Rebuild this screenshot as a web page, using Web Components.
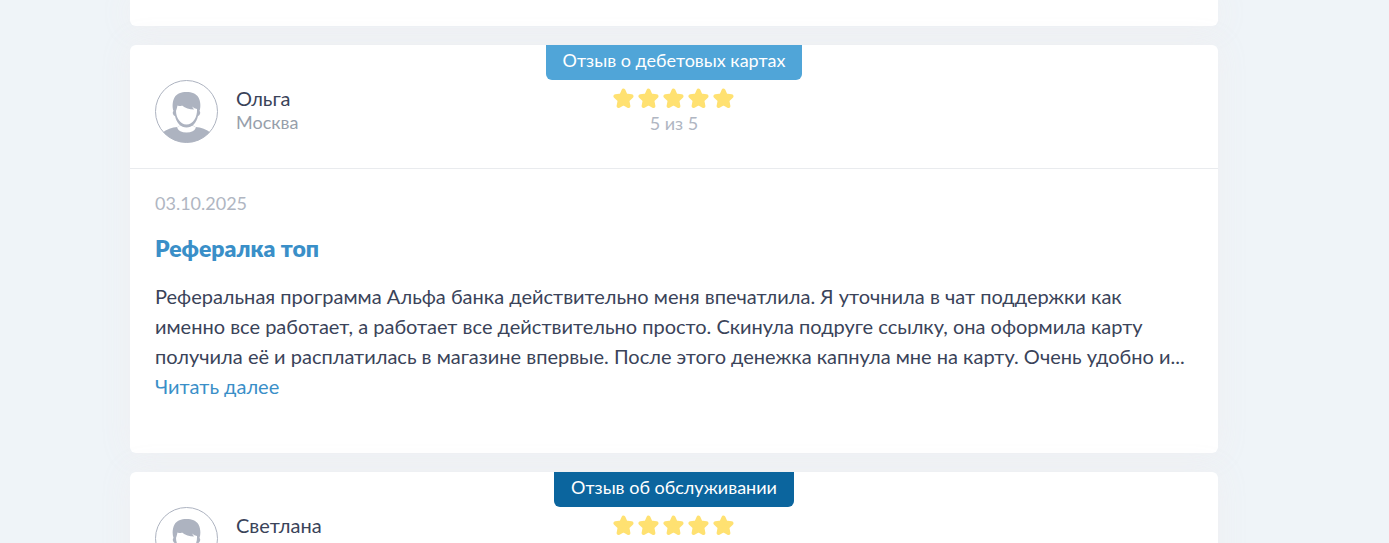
<!DOCTYPE html>
<html lang="ru">
<head>
<meta charset="utf-8">
<meta name="viewport" content="width=device-width, initial-scale=1">
<title>Отзывы</title>
<style>
  body { margin: 0; background: #eff4f8; color: #3a4359; font-family: Lato, "Open Sans", sans-serif; }
</style>
</head>
<body>
<review-feed>
  <review-card tail></review-card>
  <review-card>
    <review-tag slot="tag">Отзыв о дебетовых картах</review-tag>
    <review-author slot="author" name="Ольга" city="Москва"></review-author>
    <star-rating slot="rating" value="5" label="5 из 5"></star-rating>
    <review-text slot="text" date="03.10.2025" heading="Рефералка топ">Реферальная программа Альфа банка действительно меня впечатлила. Я уточнила в чат поддержки как именно все работает, а работает все действительно просто. Скинула подруге ссылку, она оформила карту получила её и расплатилась в магазине впервые. После этого денежка капнула мне на карту. Очень удобно и...</review-text>
  </review-card>
  <review-card>
    <review-tag slot="tag" tone="dark">Отзыв об обслуживании</review-tag>
    <review-author slot="author" name="Светлана"></review-author>
    <star-rating slot="rating" value="5"></star-rating>
  </review-card>
</review-feed>

<script>
class ReviewFeed extends HTMLElement {
  constructor() {
    super();
    this.attachShadow({ mode: 'open' }).innerHTML = `
      <style>
        :host { display: block; height: 100vh; overflow: hidden; }
        main { display: flex; flex-direction: column; gap: 19px; padding: 0 171px 0 130px; }
      </style>
      <main><slot></slot></main>`;
  }
}

class ReviewCard extends HTMLElement {
  constructor() {
    super();
    this.attachShadow({ mode: 'open' }).innerHTML = `
      <style>
        :host { display: block; position: relative; background: #fff; border-radius: 6px; box-shadow: 0 0 30px rgba(240, 238, 241, .9); }
        :host([tail]) { height: 26px; border-radius: 0 0 6px 6px; }
        :host([tail]) header { display: none; }
        header { display: grid; grid-template-columns: 1fr auto 1fr; padding: 0 25px 25px; border-bottom: 1px solid #e9ebee; }
        .left { padding-top: 35px; }
        .mid { display: flex; flex-direction: column; align-items: center; gap: 8px; }
      </style>
      <header>
        <div class="left"><slot name="author"></slot></div>
        <div class="mid"><slot name="tag"></slot><slot name="rating"></slot></div>
      </header>
      <slot name="text"></slot>`;
  }
}

class ReviewTag extends HTMLElement {
  constructor() {
    super();
    this.attachShadow({ mode: 'open' }).innerHTML = `
      <style>
        :host { display: block; padding: 0 17px; height: 35px; box-sizing: border-box; border-radius: 0 0 6px 6px;
                background: #50a5d8; color: #fff; font-size: 18px; line-height: 30px; white-space: nowrap; }
        :host([tone="dark"]) { background: #0b659e; }
      </style>
      <slot></slot>`;
  }
}

class ReviewAuthor extends HTMLElement {
  connectedCallback() {
    const city = this.getAttribute('city');
    this.attachShadow({ mode: 'open' }).innerHTML = `
      <style>
        :host { display: flex; gap: 18px; }
        svg { width: 63px; height: 63px; flex: none; }
        .who { padding-top: 6px; }
        .name { font-size: 20px; line-height: 24px; }
        .city { font-size: 18px; line-height: 24px; color: #979fab; }
      </style>
      <svg viewBox="0 0 63 63" aria-hidden="true">
        <defs><clipPath id="c"><circle cx="31.5" cy="31.5" r="31"/></clipPath></defs>
        <circle cx="31.5" cy="31.5" r="31" fill="#fff"/>
        <g clip-path="url(#c)" fill="#adb3c0">
          <path d="M7 63V53Q14 47.500 22.500 47Q26 45.500 26 42.500L37 42.500Q37 45.500 40.500 47Q49 47.500 56 53V63Z"/>
          <path d="M22 47.500Q24 52.500 31.500 52.500Q39 52.500 41 47.500L36.500 45H26Z" fill="#fff"/>
          <path d="M18.500 31C17 27 17.500 21 19.500 17.500C22 13.500 26 12 31.500 12C37 12 41 13.500 43.500 17.500C45.500 21 46 27 44.500 31C46 32 45 35.500 43 36C41.500 43 37 47.500 31.500 47.500C26 47.500 21.500 43 20 36C18 35.500 17 32 18.500 31Z"/>
          <path d="M22.500 25.500Q25.500 26.500 27 25.500Q32 29.500 39 29.500L37 26.500Q39.500 28.500 42 29C42.500 37 38 44.500 31.500 44.500C25 44.500 21 37 21 31Q22 28 22.500 25.500Z" fill="#fff"/>
        </g>
        <circle cx="31.5" cy="31.5" r="31" fill="none" stroke="#adb3c0"/>
      </svg>
      <div class="who">
        <div class="name">${this.getAttribute('name')}</div>
        ${city ? `<div class="city">${city}</div>` : ''}
      </div>`;
  }
}

class StarRating extends HTMLElement {
  connectedCallback() {
    const star = `<svg viewBox="0 0 21 21" aria-hidden="true"><path d="M10.500 2.500L12.700 7.500L18.500 8.200L14.300 12.200L15.400 18L10.500 15.300L5.600 18L6.700 12.200L2.500 8.200L8.300 7.500Z" fill="#ffe171" stroke="#ffe171" stroke-width="4" stroke-linejoin="round"/></svg>`;
    const label = this.getAttribute('label');
    this.attachShadow({ mode: 'open' }).innerHTML = `
      <style>
        :host { display: block; text-align: center; }
        .stars { display: flex; justify-content: center; gap: 4px; }
        svg { width: 21px; height: 21px; }
        .label { font-size: 18px; line-height: 28px; color: #b0b6c2; }
      </style>
      <div class="stars">${star.repeat(+this.getAttribute('value'))}</div>
      ${label ? `<div class="label">${label}</div>` : ''}`;
  }
}

class ReviewText extends HTMLElement {
  connectedCallback() {
    this.attachShadow({ mode: 'open' }).innerHTML = `
      <style>
        :host { display: block; padding: 19px 25px 52px; }
        time { display: block; font-size: 18px; line-height: 30px; color: #b0b6c2; }
        h3 { margin: 15px 0 18px; font-size: 23px; line-height: 30px; font-weight: 800; color: #3a8fc8; }
        p { margin: 0; font-size: 20px; line-height: 30px; }
        a { font-size: 20px; line-height: 30px; color: #3a8fc8; text-decoration: none; display: block; }
      </style>
      <time datetime="2025-10-03">${this.getAttribute('date')}</time>
      <h3>${this.getAttribute('heading')}</h3>
      <p><slot></slot></p>
      <a href="#">Читать далее</a>`;
  }
}

customElements.define('review-feed', ReviewFeed);
customElements.define('review-card', ReviewCard);
customElements.define('review-tag', ReviewTag);
customElements.define('review-author', ReviewAuthor);
customElements.define('star-rating', StarRating);
customElements.define('review-text', ReviewText);
</script>
</body>
</html>
